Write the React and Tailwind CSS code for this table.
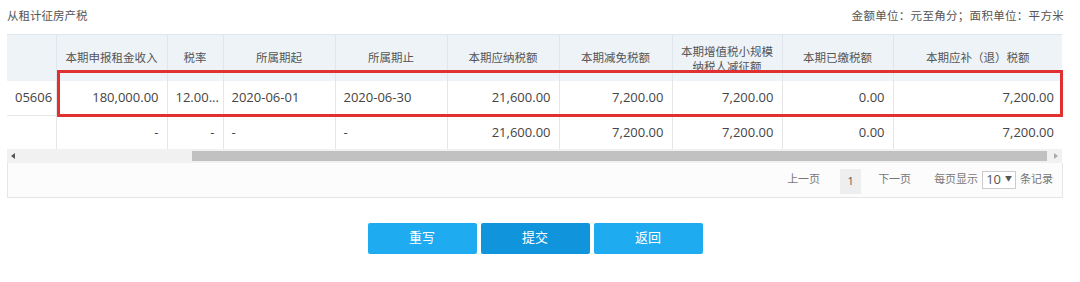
import { useState } from "react";

const cols = [49, 111, 56, 112, 112, 112, 113, 110, 111, 169];

const headers = [
    "",
    "本期申报租金收入",
    "税率",
    "所属期起",
    "所属期止",
    "本期应纳税额",
    "本期减免税额",
    ["本期增值税小规模", "纳税人减征额"],
    "本期已缴税额",
    "本期应补（退）税额",
];

const rows = [
    [
        { v: "05606", a: "left" },
        { v: "180,000.00", a: "right" },
        { v: "12.00...", a: "left" },
        { v: "2020-06-01", a: "left" },
        { v: "2020-06-30", a: "left" },
        { v: "21,600.00", a: "right" },
        { v: "7,200.00", a: "right" },
        { v: "7,200.00", a: "right" },
        { v: "0.00", a: "right" },
        { v: "7,200.00", a: "right" },
    ],
    [
        { v: "", a: "left" },
        { v: "-", a: "right" },
        { v: "-", a: "right" },
        { v: "-", a: "left" },
        { v: "-", a: "left" },
        { v: "21,600.00", a: "right" },
        { v: "7,200.00", a: "right" },
        { v: "7,200.00", a: "right" },
        { v: "0.00", a: "right" },
        { v: "7,200.00", a: "right" },
    ],
];

function App() {
    const [pageSize, setPageSize] = useState(10);

    return (
        <div className="w-[1080px] h-[282px] bg-white pl-[7px] pr-[17px] text-[#555]" style={{ fontFamily: '"Open Sans", "Noto Sans CJK SC", sans-serif' }}>
            {/* title line */}
            <div className="flex items-center justify-between h-[34px] pb-[2px] text-[11.5px] text-[#555]">
                <span>从租计征房产税</span>
                <span className="mr-[-1px] tracking-[0.3px]">金额单位：元至角分；面积单位：平方米</span>
            </div>

            {/* grid */}
            <div className="relative w-[1056px]">
                <table className="table-fixed border-collapse w-[1055px]">
                    <colgroup>
                        {cols.map((w, i) => (
                            <col key={i} style={{ width: w }} />
                        ))}
                    </colgroup>
                    <thead>
                        <tr className="h-[46px] bg-[#eef3f8]">
                            {headers.map((h, i) => (
                                <th
                                    key={i}
                                    className={`font-normal text-[11.5px] text-[#555] leading-[15px] px-[2px] text-center whitespace-nowrap border-t border-[#dfe6ee] ${i > 0 ? "border-l" : ""}`}
                                >
                                    {Array.isArray(h) ? (
                                        <div className="h-[38px] overflow-hidden pt-[5px]">
                                            <div>{h[0]}</div>
                                            <div>{h[1]}</div>
                                        </div>
                                    ) : (
                                        h
                                    )}
                                </th>
                            ))}
                        </tr>
                    </thead>
                    <tbody>
                        {rows.map((r, ri) => (
                            <tr key={ri} className={ri === 0 ? "h-[35px]" : "h-[33px]"}>
                                {r.map((c, ci) => (
                                    <td
                                        key={ci}
                                        className={`text-[13px] text-[#444] whitespace-nowrap ${c.a === "right" ? "text-right pr-[8px]" : "text-left pl-[8px]"} ${ci === 0 ? "pl-0" : "border-l border-[#e6e6e6]"} ${ri === 0 ? "border-b border-[#e6e6e6]" : ""}`}
                                    >
                                        {c.v}
                                    </td>
                                ))}
                            </tr>
                        ))}
                    </tbody>
                </table>

                {/* horizontal scrollbar */}
                <div className="relative h-[14px] w-[1055px] bg-[#f1f1f1]">
                    <div className="absolute left-[185px] top-[2px] h-[10px] w-[855px] bg-[#c1c1c1]" />
                    <svg className="absolute left-[4px] top-[4px]" width="5" height="6" viewBox="0 0 5 6">
                        <path d="M4 0 L0 3 L4 6 Z" fill="#555" />
                    </svg>
                    <svg className="absolute right-[4px] top-[4px]" width="5" height="6" viewBox="0 0 5 6">
                        <path d="M1 0 L5 3 L1 6 Z" fill="#aaa" />
                    </svg>
                </div>

                {/* pager */}
                <div className="flex items-center justify-end h-[35px] w-[1056px] border border-t-0 border-[#e6e6e6] bg-[#fcfcfc] pr-[9px] text-[11px] text-[#777]">
                    <span>上一页</span>
                    <span className="ml-[20px] flex items-center justify-center w-[21px] h-[25px] mt-[3px] bg-[#eeeeee] text-[#555]">1</span>
                    <span className="ml-[17px]">下一页</span>
                    <span className="ml-[23px]">每页显示</span>
                    <span
                        className="ml-[4px] flex items-center h-[18px] px-[3px] border border-[#cccccc] bg-white text-[13px] text-[#555] cursor-pointer"
                        onClick={() => setPageSize(pageSize === 10 ? 20 : 10)}
                    >
                        {pageSize}
                        <span className="ml-[4px] text-[7px]">▼</span>
                    </span>
                    <span className="ml-[4px]">条记录</span>
                </div>

                {/* highlighted row frame */}
                <div className="absolute left-[50px] top-[36px] w-[1006px] h-[47px] border-[3px] border-[#e0302f] pointer-events-none" />
            </div>

            {/* actions */}
            <div className="flex justify-center gap-[4px] mt-[25px]">
                <button className="w-[109px] h-[31px] rounded-[2px] bg-[#1fabef] text-white text-[13px]">重写</button>
                <button className="w-[109px] h-[31px] rounded-[2px] bg-[#1094dc] text-white text-[13px]">提交</button>
                <button className="w-[109px] h-[31px] rounded-[2px] bg-[#1fabef] text-white text-[13px]">返回</button>
            </div>
        </div>
    );
}

export default App;
